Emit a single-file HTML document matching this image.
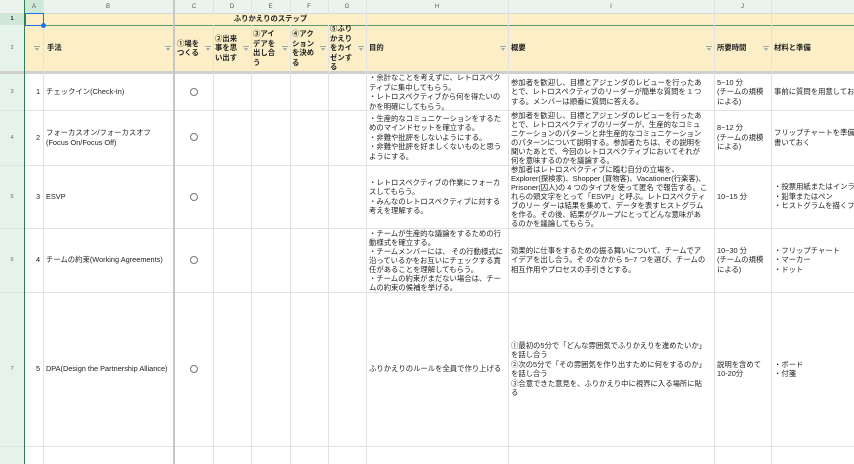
<!DOCTYPE html>
<html><head><meta charset="utf-8">
<style>
*{margin:0;padding:0;box-sizing:border-box}
body{width:854px;height:464px;overflow:hidden;background:#fff;font-family:"Liberation Sans","Noto Sans CJK JP",sans-serif;font-size:7.35px;color:#222;position:relative}
.a{position:absolute}
.c{position:absolute;display:flex;align-items:center;line-height:9.5px;white-space:nowrap;overflow:hidden}
.t{line-height:9px}
.hl{position:absolute;height:1px;background:#e2e2e2;left:0;width:854px}
.vl{position:absolute;width:1px;background:#e2e2e2;top:0;height:464px}
.ch{position:absolute;top:0;height:13px;font-size:6px;color:#555;display:flex;align-items:center;justify-content:center}
.rh{position:absolute;left:0;width:24px;font-size:5.5px;color:#666;display:flex;align-items:center;justify-content:center}
.f{position:absolute;width:6px;height:5px}
.f:before{content:"";position:absolute;left:0;top:0;width:6px;height:1px;background:#9aa}
.f:after{content:"";position:absolute;left:1px;top:2px;border-left:2px solid transparent;border-right:2px solid transparent;border-top:3px solid #9aa}
b{font-weight:bold}
.o{position:absolute;width:8px;height:8px;border:1px solid #777;border-radius:50%}
</style></head><body>
<div class="a" style="left:0;top:0;width:854px;height:13px;background:#eaf3ee"></div>
<div class="a" style="left:25px;top:0;width:18px;height:13px;background:#cfe8d8"></div>
<div class="a" style="left:0;top:13px;width:24px;height:451px;background:#e6f3eb"></div>
<div class="a" style="left:0;top:13px;width:24px;height:12px;background:#cfe8d8"></div>
<div class="a" style="left:25px;top:13px;width:829px;height:59px;background:#fcefc7"></div>
<div class="hl" style="top:13px;background:#d4dcd6"></div>
<div class="hl" style="top:25px;background:#5a9a6e;left:25px"></div>
<div class="a" style="left:0;top:71px;width:854px;height:3px;background:#cfcfcf"></div>
<div class="hl" style="top:110px"></div>
<div class="hl" style="top:165px"></div>
<div class="hl" style="top:228px"></div>
<div class="hl" style="top:292px"></div>
<div class="hl" style="top:446px"></div>
<div class="a" style="left:24px;top:0;width:1px;height:464px;background:#2e7d55"></div>
<div class="vl" style="left:43px"></div>
<div class="a" style="left:173px;top:0;width:2px;height:464px;background:#c6c6c6"></div>
<div class="vl" style="left:213px"></div>
<div class="vl" style="left:251px"></div>
<div class="vl" style="left:290px"></div>
<div class="vl" style="left:328px"></div>
<div class="vl" style="left:366px"></div>
<div class="vl" style="left:508px"></div>
<div class="vl" style="left:714px"></div>
<div class="vl" style="left:771px"></div>
<div class="a" style="left:176px;top:14px;width:190px;height:11px;background:#fcefc7"></div>
<div class="a" style="left:44px;top:14px;width:129px;height:11px;background:#fcefc7"></div>
<div class="a" style="left:25px;top:13px;width:19px;height:13px;border:1.5px solid #1a73e8"></div>
<div class="a" style="left:41px;top:23px;width:5px;height:5px;background:#1a73e8;border-radius:50%"></div>
<div class="ch" style="left:25px;width:18px">A</div>
<div class="ch" style="left:43px;width:130px">B</div>
<div class="ch" style="left:175px;width:38px">C</div>
<div class="ch" style="left:213px;width:38px">D</div>
<div class="ch" style="left:251px;width:39px">E</div>
<div class="ch" style="left:290px;width:38px">F</div>
<div class="ch" style="left:328px;width:38px">G</div>
<div class="ch" style="left:366px;width:142px">H</div>
<div class="ch" style="left:508px;width:206px">I</div>
<div class="ch" style="left:714px;width:57px">J</div>
<div class="rh" style="top:13px;height:12px;color:#222;font-weight:bold">1</div>
<div class="rh" style="top:25px;height:46px">2</div>
<div class="rh" style="top:74px;height:36px">3</div>
<div class="rh" style="top:110px;height:55px">4</div>
<div class="rh" style="top:165px;height:63px">5</div>
<div class="rh" style="top:228px;height:64px">6</div>
<div class="rh" style="top:292px;height:154px">7</div>
<div class="c" style="left:175px;top:13px;width:191px;height:12px;justify-content:center"><b>ふりかえりのステップ</b></div>
<div class="f" style="left:34px;top:46px"></div>
<div class="c" style="left:47px;top:25px;height:46px"><b>手法</b></div>
<div class="f" style="left:165px;top:46px"></div>
<div class="c" style="left:177px;top:25px;height:46px"><b>①場を<br>つくる</b></div>
<div class="f" style="left:205px;top:46px"></div>
<div class="c" style="left:215px;top:25px;height:46px"><b>②出来<br>事を思<br>い出す</b></div>
<div class="f" style="left:243px;top:46px"></div>
<div class="c" style="left:253px;top:25px;height:46px"><b>③アイ<br>デアを<br>出し合<br>う</b></div>
<div class="f" style="left:282px;top:46px"></div>
<div class="c" style="left:292px;top:25px;height:46px"><b>④アク<br>ション<br>を決め<br>る</b></div>
<div class="f" style="left:320px;top:46px"></div>
<div class="c" style="left:330px;top:25px;height:46px"><b>⑤ふり<br>かえり<br>をカイ<br>ゼンす<br>る</b></div>
<div class="f" style="left:358px;top:46px"></div>
<div class="c" style="left:369px;top:25px;height:46px"><b>目的</b></div>
<div class="f" style="left:500px;top:46px"></div>
<div class="c" style="left:511px;top:25px;height:46px"><b>概要</b></div>
<div class="f" style="left:706px;top:46px"></div>
<div class="c" style="left:717px;top:25px;height:46px"><b>所要時間</b></div>
<div class="f" style="left:763px;top:46px"></div>
<div class="c" style="left:774px;top:25px;height:46px"><b>材料と準備</b></div>
<div class="c" style="left:36px;top:74px;height:36px">1</div>
<div class="c" style="left:46px;top:74px;height:36px">チェックイン(Check-In)</div>
<div class="o" style="left:190px;top:88px"></div>
<div class="c" style="left:369px;top:74px;height:36px">・余計なことを考えずに、レトロスペク<br>ティブに集中してもらう。<br>・レトロスペクティブから何を得たいの<br>かを明確にしてもらう。</div>
<div class="c" style="left:511px;top:74px;height:36px">参加者を歓迎し、目標とアジェンダのレビューを行ったあ<br>とで、レトロスペクティブのリーダーが簡単な質問を 1 つ<br>する。メンバーは順番に質問に答える。</div>
<div class="c" style="left:717px;top:74px;height:36px">5~10 分<br>(チームの規模<br>による)</div>
<div class="c" style="left:774px;top:74px;height:36px;width:80px">事前に質問を用意しておく</div>
<div class="c" style="left:36px;top:110px;height:55px">2</div>
<div class="c" style="left:46px;top:110px;height:55px">フォーカスオン/フォーカスオフ<br>(Focus On/Focus Off)</div>
<div class="o" style="left:190px;top:133px"></div>
<div class="c" style="left:369px;top:110px;height:55px">・生産的なコミュニケーションをするた<br>めのマインドセットを確立する。<br>・非難や批評をしないようにする。<br>・非難や批評を好ましくないものと思う<br>ようにする。</div>
<div class="c t" style="left:511px;top:110px;height:55px">参加者を歓迎し、目標とアジェンダのレビューを行ったあ<br>とで、レトロスペクティブのリーダーが、生産的なコミュ<br>ニケーションのパターンと非生産的なコミュニケーション<br>のパターンについて説明する。参加者たちは、その説明を<br>聞いたあとで、今回のレトロスペクティブにおいてそれが<br>何を意味するのかを議論する。</div>
<div class="c" style="left:717px;top:110px;height:55px">8~12 分<br>(チームの規模<br>による)</div>
<div class="c" style="left:774px;top:110px;height:55px;width:80px">フリップチャートを準備<br>書いておく</div>
<div class="c" style="left:36px;top:165px;height:63px">3</div>
<div class="c" style="left:46px;top:165px;height:63px">ESVP</div>
<div class="o" style="left:190px;top:193px"></div>
<div class="c" style="left:369px;top:165px;height:63px">・レトロスペクティブの作業にフォーカ<br>スしてもらう。<br>・みんなのレトロスペクティブに対する<br>考えを理解する。</div>
<div class="c t" style="left:511px;top:165px;height:63px">参加者はレトロスペクティブに臨む自分の立場を、<br>Explorer(探検家)、Shopper (買物客)、Vacationer(行楽客)、<br>Prisoner(囚人)の 4 つのタイプを使って匿名 で報告する。こ<br>れらの頭文字をとって「ESVP」と呼ぶ。レトロスペクティ<br>ブのリー ダーは結果を集めて、データを表すヒストグラム<br>を作る。その後、結果がグループにとってどんな意味があ<br>るのかを議論してもらう。</div>
<div class="c" style="left:717px;top:165px;height:63px">10~15 分</div>
<div class="c" style="left:774px;top:165px;height:63px;width:80px">・投票用紙またはインラ<br>・鉛筆またはペン<br>・ヒストグラムを描くフ</div>
<div class="c" style="left:36px;top:228px;height:64px">4</div>
<div class="c" style="left:46px;top:228px;height:64px">チームの約束(Working Agreements)</div>
<div class="o" style="left:190px;top:256px"></div>
<div class="c t" style="left:369px;top:228px;height:64px">・チームが生産的な議論をするための行<br>動様式を確立する。<br>・チームメンバーには、 その行動様式に<br>沿っているかをお互いにチェックする責<br>任があることを理解してもらう。<br>・チームの約束がまだない場合は、チー<br>ムの約束の候補を挙げる。</div>
<div class="c" style="left:511px;top:228px;height:64px">効果的に仕事をするための振る舞いについて、チームでア<br>イデアを出し合う。そ のなかから 5~7 つを選び、チームの<br>相互作用やプロセスの手引きとする。</div>
<div class="c" style="left:717px;top:228px;height:64px">10~30 分<br>(チームの規模<br>による)</div>
<div class="c" style="left:774px;top:228px;height:64px">・フリップチャート<br>・マーカー<br>・ドット</div>
<div class="c" style="left:36px;top:292px;height:154px">5</div>
<div class="c" style="left:46px;top:292px;height:154px">DPA(Design the Partnership Alliance)</div>
<div class="o" style="left:190px;top:365px"></div>
<div class="c" style="left:369px;top:292px;height:154px">ふりかえりのルールを全員で作り上げる</div>
<div class="c" style="left:511px;top:292px;height:154px">①最初の5分で「どんな雰囲気でふりかえりを進めたいか」<br>を話し合う<br>②次の5分で「その雰囲気を作り出すために何をするのか」<br>を話し合う<br>③合意できた意見を、ふりかえり中に視界に入る場所に貼<br>る</div>
<div class="c" style="left:717px;top:292px;height:154px">説明を含めて<br>10-20分</div>
<div class="c" style="left:774px;top:292px;height:154px">・ボード<br>・付箋</div>
</body></html>
